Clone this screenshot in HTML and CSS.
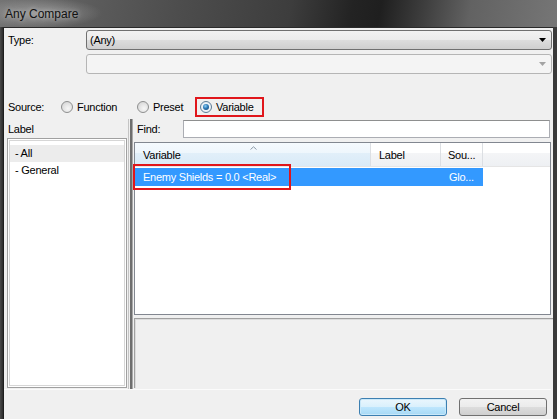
FILE: index.html
```html
<!DOCTYPE html>
<html>
<head>
<meta charset="utf-8">
<title>Any Compare</title>
<link rel="stylesheet" href="styles.css">
</head>
<body>
<div class="window">
  <div class="titlebar"><span class="title">Any Compare</span></div>
  <div class="frame">
    <div class="client">
      <div class="type-grid">
        <span class="lbl">Type:</span>
        <div class="combo">
          <span class="combo-text">(Any)</span>
          <svg class="combo-arrow" width="7" height="4" viewBox="0 0 7 4"><path d="M0 0H7L3.5 4Z" fill="#000"/></svg>
        </div>
        <span></span>
        <div class="combo disabled">
          <span class="combo-text"></span>
          <svg class="combo-arrow" width="7" height="4" viewBox="0 0 7 4"><path d="M0 0H7L3.5 4Z" fill="#a3a3a3"/></svg>
        </div>
      </div>

      <div class="source-row">
        <span class="source-lbl">Source:</span>
        <label class="opt opt-function"><span class="radio"></span>Function</label>
        <label class="opt opt-preset"><span class="radio"></span>Preset</label>
        <label class="opt opt-variable"><span class="radio on"></span>Variable</label>
      </div>

      <div class="split">
        <div class="left-pane">
          <div class="pane-head">Label</div>
          <ul class="tree">
            <li class="cur">- All</li>
            <li>- General</li>
          </ul>
        </div>
        <div class="splitter"></div>
        <div class="right-pane">
          <div class="find-row">
            <span class="find-lbl">Find:</span>
            <div class="input"></div>
          </div>
          <div class="listview">
            <div class="lv-head">
              <div class="col c1 sorted">Variable
                <svg class="sort" width="7" height="4" viewBox="0 0 7 4"><path d="M0.5 3.5L3.5 0.8L6.5 3.5" fill="none" stroke="#8b99a8" stroke-width="1"/></svg>
              </div>
              <div class="col c2">Label</div>
              <div class="col c3">Sou...</div>
              <div class="col filler"></div>
            </div>
            <div class="lv-row sel">
              <div class="cell c1">Enemy Shields = 0.0 &lt;Real&gt;</div>
              <div class="cell c2"></div>
              <div class="cell c3">Glo...</div>
            </div>
            <div class="row-mark"></div>
          </div>
          <div class="desc"></div>
        </div>
      </div>

      <div class="buttons">
        <button class="btn default">OK</button>
        <button class="btn">Cancel</button>
      </div>
    </div>
  </div>
</div>
</body>
</html>
```

FILE: styles.css
```css
* {
  box-sizing: border-box;
  margin: 0;
  padding: 0;
}

html, body {
  width: 557px;
  height: 419px;
  overflow: hidden;
}

body {
  font-family: "Liberation Sans", Arial, sans-serif;
  font-size: 11px;
  letter-spacing: -0.25px;
  color: #000;
  background: #3a3a3a;
}

.window {
  display: flex;
  flex-direction: column;
  height: 419px;
}

/* glass caption bar */
.titlebar {
  flex: none;
  height: 27px;
  display: flex;
  align-items: center;
  padding-left: 5px;
  background:
    radial-gradient(ellipse 62px 15px at 40px 13px, rgba(190,190,190,0.55), rgba(190,190,190,0) 100%),
    linear-gradient(100deg, #747474 0%, #5e5e5e 14%, #4d4d4d 32%, #3d3d3d 52%, #232323 63%, #1f1f1f 68%, #3f3f3f 76%, #626262 84%, #767676 100%);
}

.title {
  font-size: 12px;
  letter-spacing: 0;
  color: #111;
  text-shadow: 0 0 5px rgba(225,225,225,0.7);
}

.frame {
  flex: 1;
  display: flex;
  padding: 0 4px 0 3px;
  background: linear-gradient(90deg, #4a4a4a 0, #2c2c2c 3px, #3a3a3a 3px, #3a3a3a 100%);
}

.client {
  flex: 1;
  display: flex;
  flex-direction: column;
  background: #f0f0f0;
  border-top: 1px solid #2a2a2a;
  border-left: 1px solid #1e1e1e;
  padding: 2px 2px 0 3px;
}

/* Type: row with its two drop-downs */
.type-grid {
  display: grid;
  grid-template-columns: 79px 1fr;
  row-gap: 4px;
  margin-right: -1px;
}

.lbl {
  align-self: center;
  padding-left: 1px;
}

.combo {
  height: 20px;
  display: flex;
  align-items: center;
  justify-content: space-between;
  padding: 0 5px 0 3px;
  border: 1px solid #707070;
  border-radius: 3px;
  background: linear-gradient(#f2f2f2 0%, #ebebeb 50%, #dddddd 50%, #cfcfcf 100%);
}

.combo.disabled {
  border-color: #b5b5b5;
  background: #f4f4f4;
}

/* Source radio group */
.source-row {
  display: flex;
  align-items: center;
  height: 20px;
  margin-top: 23px;
}

.source-lbl {
  width: 54px;
  padding-left: 1px;
}

.opt {
  display: flex;
  align-items: center;
  gap: 4px;
  height: 20px;
}

.opt-function { width: 76px; }
.opt-preset { width: 58px; }

.opt-variable {
  width: 69px;
  border: 2px solid #e0161b;
  padding-left: 3px;
}

.radio {
  width: 12px;
  height: 12px;
  border-radius: 50%;
  border: 1px solid #8e8f8f;
  background: radial-gradient(circle at 60% 65%, #f7f7f7 0%, #e2e2e2 55%, #cfcfcf 100%);
  display: flex;
  align-items: center;
  justify-content: center;
}

.radio.on {
  border-color: #5d7c95;
  background: radial-gradient(circle at 50% 50%, #ffffff 0%, #dfe9f2 100%);
}

.radio.on::after {
  content: "";
  width: 6px;
  height: 6px;
  border-radius: 50%;
  background: radial-gradient(circle at 40% 35%, #8fd0f5 0%, #2d7ab8 45%, #163f68 100%);
}

/* tree on the left, list on the right */
.split {
  display: flex;
  height: 270px;
  margin-top: 2px;
}

.left-pane {
  width: 120px;
  display: flex;
  flex-direction: column;
}

.pane-head {
  height: 19px;
  display: flex;
  align-items: center;
  padding-left: 1px;
}

.tree {
  list-style: none;
  height: 250px;
  background: #fff;
  border: 1px solid #a0a0a0;
  box-shadow: inset 0 0 0 1px #fff, inset 0 0 0 2px #d6d6d6;
  padding: 6px 2px 0 2px;
}

.tree li {
  height: 17px;
  line-height: 17px;
  padding-left: 5px;
}

.tree li.cur {
  background: #ececec;
}

.splitter {
  width: 7px;
  background: linear-gradient(90deg,
    transparent 0, transparent 1px,
    #c4c4c4 1px, #c4c4c4 2px,
    transparent 2px, transparent 3px,
    #6e6e6e 3px, #6e6e6e 5px,
    #a8a8a8 5px, #a8a8a8 6px,
    transparent 6px);
}

.right-pane {
  flex: 1;
  display: flex;
  flex-direction: column;
}

.find-row {
  height: 19px;
  display: flex;
  align-items: center;
  padding-top: 1px;
}

.find-lbl {
  width: 49px;
  padding-left: 3px;
}

.input {
  flex: 1;
  height: 18px;
  margin-right: 1px;
  background: #fff;
  border: 1px solid #abadb3;
  border-top-color: #8e8f8f;
}

.listview {
  position: relative;
  height: 173px;
  margin-top: 4px;
  background: #fff;
  border: 1px solid #828790;
}

.lv-head {
  display: flex;
  height: 24px;
  background: linear-gradient(#ffffff 0%, #ffffff 45%, #f4f5f7 45%, #eef0f3 100%);
  border-bottom: 1px solid #e5e5e5;
}

.col {
  display: flex;
  align-items: center;
  padding-left: 8px;
  border-right: 1px solid #dcdfe3;
}

.col.sorted {
  position: relative;
  background: linear-gradient(#f5fafe 0%, #eef6fc 45%, #e1eff9 45%, #d9eaf7 100%);
}

.col.filler {
  flex: 1;
  border-right: none;
}

.sort {
  position: absolute;
  top: 3px;
  left: 115px;
}

.c1 { width: 236px; }
.c2 { width: 70px; }
.c3 { width: 42px; padding-left: 7px; }

.lv-row {
  display: flex;
  height: 18px;
  margin-top: 1px;
}

.cell {
  display: flex;
  align-items: center;
  padding-left: 8px;
}

.lv-row.sel .cell {
  background: #3399ff;
  color: #fff;
}

/* red highlight drawn over the selected row */
.row-mark {
  position: absolute;
  left: -2px;
  top: 21px;
  width: 158px;
  height: 26px;
  border: 2px solid #e0161b;
}

.desc {
  height: 70px;
  margin-top: 3px;
  margin-right: -2px;
  background: #f0f0f0;
  border-top: 1px solid #a0a0a0;
  border-left: 1px solid #a0a0a0;
  box-shadow: inset 1px 1px 0 #dcdcdc;
}

/* OK / Cancel */
.buttons {
  display: flex;
  justify-content: flex-end;
  gap: 12px;
  padding: 8px 4px 0 0;
  margin-left: -3px;
  border-top: 1px solid #fbfbfb;
}

.btn {
  width: 88px;
  height: 18px;
  font-family: "Liberation Sans", Arial, sans-serif;
  font-size: 11px;
  letter-spacing: -0.25px;
  color: #000;
  border: 1px solid #707070;
  border-radius: 3px;
  background: linear-gradient(#f2f2f2 0%, #ebebeb 50%, #dddddd 50%, #cfcfcf 100%);
}

.btn.default {
  border-color: #3c7fb1;
  background: linear-gradient(#eaf6fd 0%, #d9f0fc 50%, #bee6fd 50%, #a7d9f5 100%);
  box-shadow: inset 0 0 0 1px #c9e8f9;
}
```
